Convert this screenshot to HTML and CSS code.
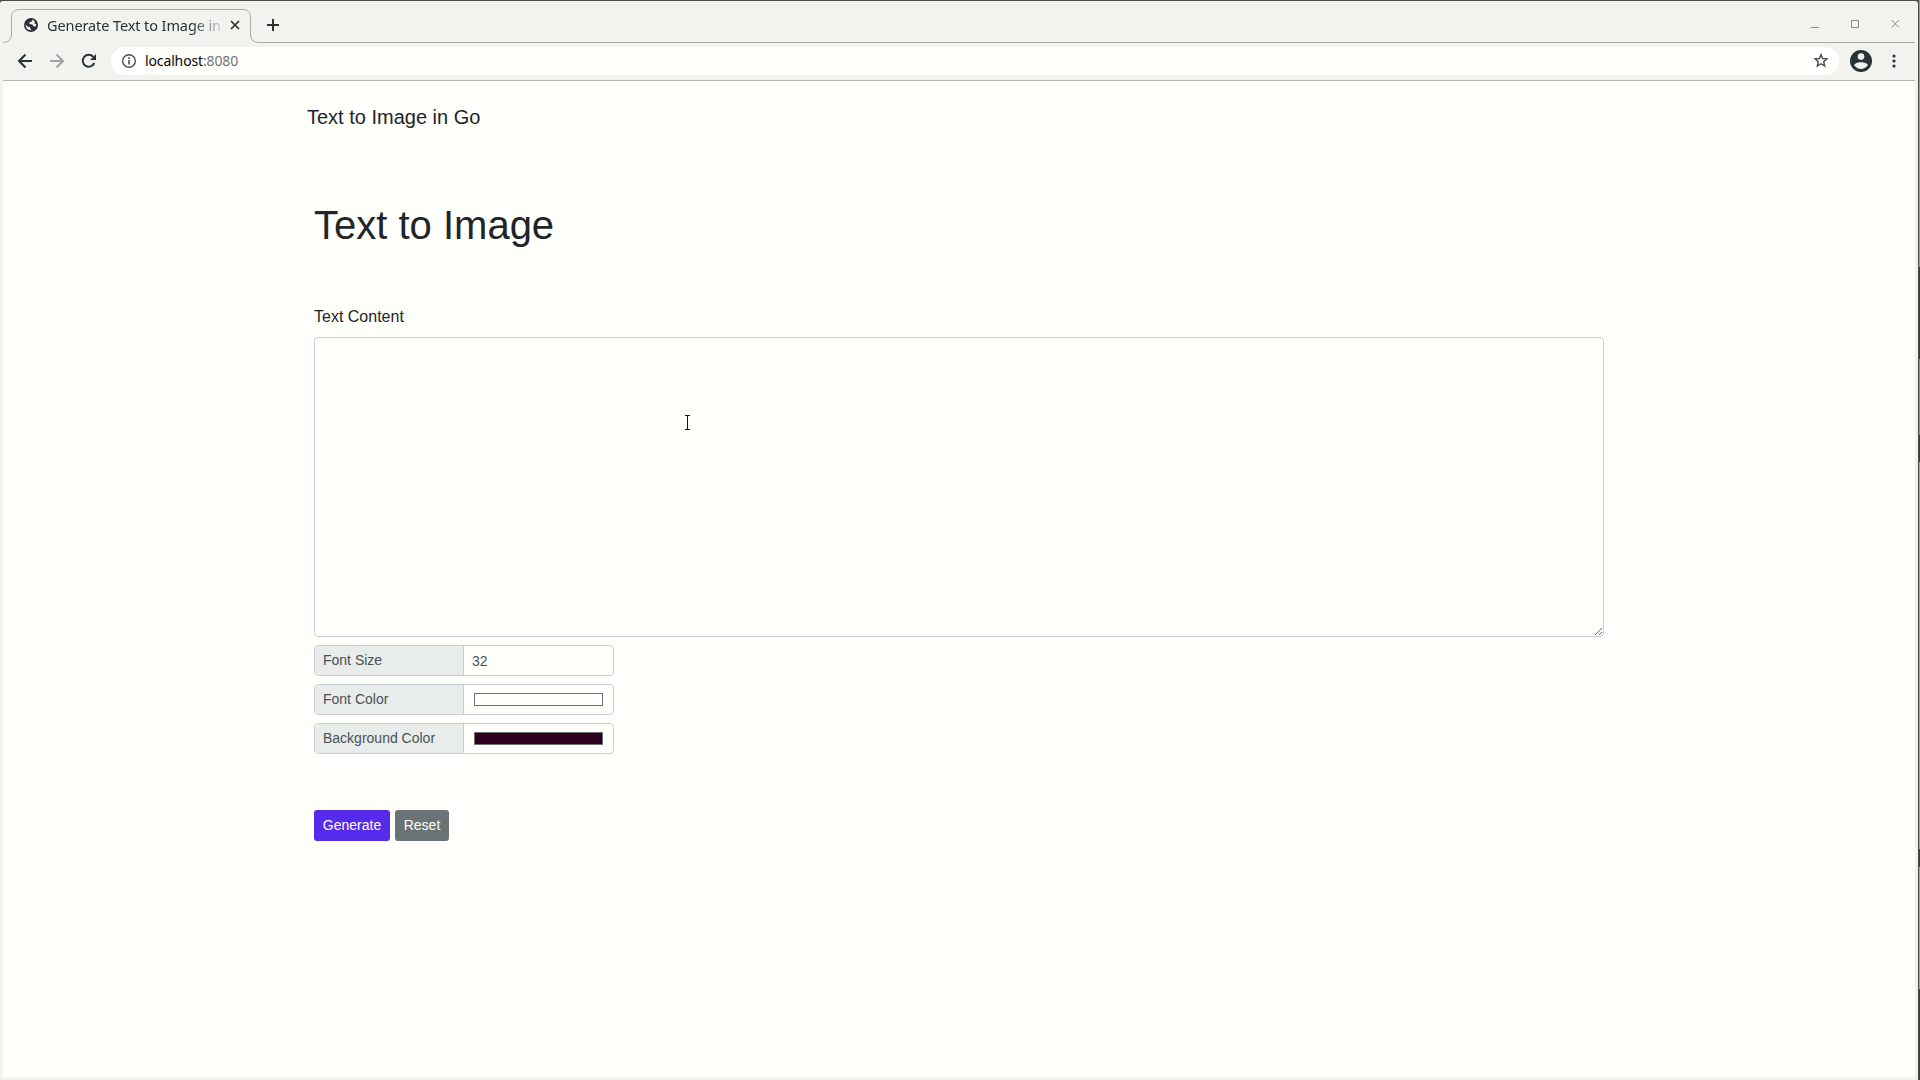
FILE: index.html
```html
<!DOCTYPE html>
<html lang="en">
<head>
<meta charset="utf-8">
<title>Generate Text to Image in Go</title>
<link rel="stylesheet" href="styles.css">
</head>
<body>
<div class="desktop">
  <div class="window">
    <div class="tabstrip">
      <svg class="tab-outline" width="1912" height="43" viewBox="0 0 1912 43" fill="none" stroke="#a9aaa7"><path d="M0 41.500Q8.500 41.500 8.500 33V16Q8.500 8.500 16.500 8.500H239.500Q247.500 8.500 247.500 16V33Q247.500 41.500 256 41.500H1912"/></svg>
      <div class="tab">
        <svg class="globe" width="14" height="14" viewBox="0 0 14 14"><circle cx="7" cy="7" r="7" fill="#2b3236"/><path d="M1.500 6.500L4 8.700 6 9.300 7.200 12.200Q2 12.500 1.500 6.500zM8.700 1.800L7.500 3.800 5.500 4.300 5.300 6 8.400 6.600 9.700 8.600 11.600 8.600 12.300 6.500 10.500 5.300 10.700 3.200z" fill="#f2f3ee"/></svg>
        <span class="tab-title">Generate Text to Image in</span>
        <svg class="tab-close" width="10" height="10" viewBox="0 0 10 10" stroke="#2b3236" stroke-width="1.700"><path d="M1 1L9 9M9 1L1 9"/></svg>
      </div>
      <svg class="new-tab" width="14" height="14" viewBox="0 0 14 14" stroke="#2b3236" stroke-width="2"><path d="M7 1V13M1 7H13"/></svg>
      <svg class="controls" width="90" height="12" viewBox="0 0 90 12" fill="none" stroke="#8b8d89"><path d="M1 9.500H9M41.500 2.500H48.500V9.500H41.500zM81.500 2L89 9.500M89 2L81.500 9.500"/></svg>
    </div>
    <div class="toolbar">
      <svg class="nav" width="16" height="16" viewBox="0 0 16 16" fill="none" stroke="#2b3236" stroke-width="2"><path d="M15 8H2M8.500 1.500L2 8 8.500 14.500"/></svg>
      <svg class="nav" width="16" height="16" viewBox="0 0 16 16" fill="none" stroke="#a1a3a0" stroke-width="2"><path d="M1 8H14M7.500 1.500L14 8 7.500 14.500"/></svg>
      <svg class="nav" width="16" height="16" viewBox="0 0 16 16" fill="none" stroke="#2b3236" stroke-width="2"><path d="M13.300 10A6 6 0 1 1 12.300 3.800"/><path d="M15 1V7H9z" fill="#2b3236" stroke="none"/></svg>
      <div class="address">
        <svg class="info" width="14" height="14" viewBox="0 0 14 14" fill="none" stroke="#4b4e50"><circle cx="7" cy="7" r="6.300" stroke-width="1.400"/><path d="M7 6V10.500M7 3.300V4.900" stroke-width="1.600"/></svg>
        <span class="url"><span class="host">localhost</span>:8080</span>
        <svg class="star" width="16" height="15" viewBox="0 0 16 15" fill="none" stroke="#4b4e50" stroke-width="1.400"><path d="M8 1.500L9.600 5.500 14 5.900 10.700 8.700 11.700 13 8 10.700 4.300 13 5.300 8.700 2 5.900 6.400 5.500z"/></svg>
      </div>
      <svg class="profile" width="22" height="22" viewBox="0 0 22 22"><circle cx="11" cy="11" r="11" fill="#2b3236"/><circle cx="11" cy="6.600" r="3.300" fill="#f2f3ee"/><path d="M4.400 15.200C4.400 11.200 17.600 11.200 17.600 15.200Q15 19 11 19T4.400 15.200z" fill="#f2f3ee"/></svg>
      <svg class="menu" width="4" height="14" viewBox="0 0 4 14" fill="#2b3236"><circle cx="2" cy="2" r="1.600"/><circle cx="2" cy="7" r="1.600"/><circle cx="2" cy="12" r="1.600"/></svg>
    </div>
    <main class="page">
      <div class="brand">Text to Image in Go</div>
      <form class="content">
        <h1 class="heading">Text to Image</h1>
        <label class="label" for="text">Text Content</label>
        <textarea class="textarea" id="text"></textarea>
        <div class="group"><span class="addon">Font Size</span><span class="value size">32</span></div>
        <div class="group"><span class="addon">Font Color</span><span class="value"><span class="swatch"></span></span></div>
        <div class="group"><span class="addon">Background Color</span><span class="value"><span class="swatch dark"></span></span></div>
        <div class="actions"><button class="btn" type="button">Generate</button><button class="btn reset" type="button">Reset</button></div>
      </form>
    </main>
  </div>
  <svg class="cursor" width="8" height="18" viewBox="0 0 8 18" fill="none" stroke="#161616"><path d="M1 1.500H6M3.500 2V15M1 15.500H6"/></svg>
</div>
</body>
</html>
```
FILE: styles.css
```css
* { box-sizing: border-box; }
body { margin: 0; overflow: hidden; }
svg { display: block; flex: none; }
.desktop {
  position: relative;
  width: 1920px;
  height: 1080px;
  padding: 1px 2px 0 0;
  background: linear-gradient(#68b5a1 0 3px, #9b9d9a 3px 267px, #3c3e39 267px 359px, #8e908c 359px 435px, #3c3e39 435px 462px, #a3a5a1 462px 849px, #3c3e39 849px 867px, #a3a5a1 867px 989px, #3c3e39 989px) right / 1px 100% no-repeat #4b4d49;
}
.window {
  display: flex;
  flex-direction: column;
  height: 1079px;
  padding: 0 3px 3px;
  background: #f2f3ee;
  border-radius: 3px 3px 0 0;
}
.tabstrip { position: relative; display: flex; flex: none; align-items: center; height: 42px; padding-top: 8px; }
.tab-outline { position: absolute; left: 0; top: 0; }
.tab { display: flex; align-items: center; width: 247px; padding: 0 10px 2px 21px; }
.tab-title {
  width: 176px;
  margin-left: 9px;
  white-space: nowrap;
  font: 14.5px/20px "Noto Sans", sans-serif;
  letter-spacing: -0.1px;
  color: #2b3236;
  -webkit-mask-image: linear-gradient(90deg, #000 145px, transparent 180px);
  mask-image: linear-gradient(90deg, #000 145px, transparent 180px);
}
.tab-close { margin-left: 8px; }
.new-tab { margin: 0 0 2px 16px; }
.controls { margin: 0 15px 5px auto; }
.toolbar { display: flex; flex: none; align-items: center; height: 38px; padding: 0 19px 2px 14px; border-bottom: 1px solid #b9b0a8; }
.nav { margin-right: 16px; }
.address { display: flex; flex: 1; align-items: center; height: 28px; padding: 0 10px 0 11px; background: #fffffc; border-radius: 14px; }
.nav + .address { margin-left: -2px; }
.url { margin-left: 9px; font: 14px/20px "Noto Sans", sans-serif; letter-spacing: -0.13px; color: #70757a; }
.host { color: #050505; }
.star { margin-left: auto; }
.profile { margin-left: 11px; }
.menu { margin-left: 20px; }
.page { flex: 1; padding: 21px 304px 0; background: #fffffc; font-family: "Liberation Sans", Arial, sans-serif; color: #212529; }
.brand { font-size: 20px; line-height: 30px; }
.content { width: 1290px; margin-left: 7px; }
.heading { margin: 69px 0 0; font-size: 40px; font-weight: 500; line-height: 48px; }
.label { display: block; margin: 56px 0 8px; font-size: 16px; line-height: 24px; }
.textarea { display: block; width: 1290px; height: 300px; margin: 0 0 8px; padding: 6px 12px; background: transparent; border: 1px solid #c8d0d6; border-radius: 4px; }
.group { display: flex; width: 300px; height: 31px; margin-bottom: 8px; border: 1px solid #c8d0d6; border-radius: 4px; overflow: hidden; font-size: 14px; line-height: 21px; color: #495057; }
.addon { width: 149px; padding: 4px 8px; background: #e8ecea; border-right: 1px solid #c8d0d6; }
.value { flex: 1; padding: 8px 10px; }
.size { padding: 5px 8px 3px; }
.swatch { display: block; height: 13px; border: 1px solid #6d716f; }
.dark { background: #2e001e; }
.actions { display: flex; gap: 5px; margin-top: 56px; }
.btn { width: 76px; height: 31px; padding: 0; border: 0; border-radius: 3px; background: #572bec; color: #fffffc; font: 14px/21px "Liberation Sans", Arial, sans-serif; }
.reset { width: 54px; background: #6a7376; }
.cursor { position: absolute; left: 684px; top: 414px; }
```
